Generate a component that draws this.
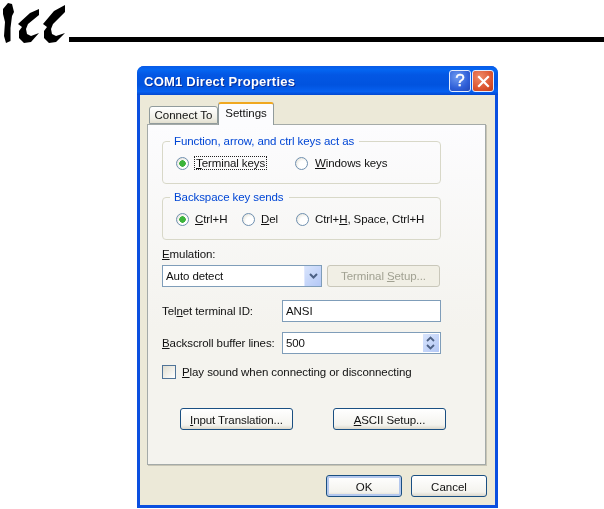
<div class="page">
  <header class="head">
    <svg class="logo" width="69" height="46" viewBox="0 0 69 46" aria-label="ICC logo">
      <path d="M8 3 L12 4 L14 12 L12 16 L10.5 28 L10.5 41 L6 43 L4 36 L5 22 L3 14 L3 9 Z" fill="#000"/>
      <path d="M39 9 L30 13 L18 24 L22 27 L19 31 L19 38 L24 43 L31 42 L39 33 L31 36 L27 34 L26 29 L28 24 L39 15 Z" fill="#000"/>
      <path d="M65 5 L54 11 L43 24 L47 27 L44 31 L44 38 L49 43 L56 42 L65 33 L56 36 L52 34 L51 29 L53 24 L65 12 Z" fill="#000"/>
    </svg>
    <div class="rule"></div>
  </header>

  <div class="window">
    <div class="titlebar">
      <span class="title">COM1 Direct Properties</span>
      <span class="cap help">?</span>
      <span class="cap close">
        <svg width="13" height="13" viewBox="0 0 13 13"><path d="M2 2 L11 11 M11 2 L2 11" stroke="#fff" stroke-width="2.2" stroke-linecap="square"/></svg>
      </span>
    </div>

    <div class="client">
      <div class="tabs">
        <div class="tab back">Connect To</div>
        <div class="tab active">Settings</div>
      </div>

      <div class="panel">
        <fieldset class="group">
          <legend>Function, arrow, and ctrl keys act as</legend>
          <div class="radios keys">
            <label class="r first"><input type="radio" name="k" checked /><span class="focus"><u>T</u>erminal keys</span></label>
            <label class="r"><input type="radio" name="k" /><span><u>W</u>indows keys</span></label>
          </div>
        </fieldset>

        <fieldset class="group second">
          <legend>Backspace key sends</legend>
          <div class="radios">
            <label class="r ctrl"><input type="radio" name="b" checked /><span><u>C</u>trl+H</span></label>
            <label class="r del"><input type="radio" name="b" /><span><u>D</u>el</span></label>
            <label class="r"><input type="radio" name="b" /><span>Ctrl+<u>H</u>, Space, Ctrl+H</span></label>
          </div>
        </fieldset>

        <div class="emu-label"><u>E</u>mulation:</div>
        <div class="emu-row">
          <div class="combo">
            <span>Auto detect</span>
            <span class="drop">
              <svg width="11" height="9" viewBox="0 0 11 9"><path d="M2 2 L5.5 5.5 L9 2" fill="none" stroke="#4d6185" stroke-width="2"/></svg>
            </span>
          </div>
          <button class="btn disabled">Terminal <u>S</u>etup...</button>
        </div>

        <div class="field telnet">
          <span class="flabel">Tel<u>n</u>et terminal ID:</span>
          <div class="input">ANSI</div>
        </div>
        <div class="field scroll">
          <span class="flabel"><u>B</u>ackscroll buffer lines:</span>
          <div class="input spin-input">
            <span>500</span>
            <span class="spin">
              <svg width="15" height="18" viewBox="0 0 15 18"><path d="M4 7 L7.5 3.5 L11 7 M4 11 L7.5 14.5 L11 11" fill="none" stroke="#4d6185" stroke-width="1.8"/></svg>
            </span>
          </div>
        </div>

        <label class="check"><input type="checkbox" /><span><u>P</u>lay sound when connecting or disconnecting</span></label>

        <div class="actions">
          <button class="btn wide"><u>I</u>nput Translation...</button>
          <button class="btn wide"><u>A</u>SCII Setup...</button>
        </div>
      </div>

      <div class="footer">
        <button class="btn foot default">OK</button>
        <button class="btn foot">Cancel</button>
      </div>
    </div>
  </div>
</div>

<style>
  :global(body) { margin: 0; background: #fff; }
  .page { width: 604px; height: 509px; overflow: hidden; background: #fff; font-family: "Liberation Sans", Arial, sans-serif; font-size: 11.5px; color: #111; }

  .head { height: 66px; display: flex; align-items: flex-start; }
  .logo { flex: none; }
  .rule { flex: 1; height: 5px; margin-top: 37px; background: #000; }

  .window { width: 361px; height: 442px; margin-left: 137px; display: flex; flex-direction: column; border-radius: 7px 7px 0 0; overflow: hidden; background: #0a4fe0; filter: blur(0.45px); }

  .titlebar { height: 29px; flex: none; display: flex; align-items: center; gap: 1px; padding: 1px 4px 0 7px; box-sizing: border-box; background: linear-gradient(#0a5ae6 0%, #0466f2 12%, #0357e4 30%, #0153df 65%, #0660f0 88%, #0448d0 100%); }
  .title { flex: 1; color: #fff; font-weight: 700; font-size: 13px; letter-spacing: 0.24px; text-shadow: 1px 1px 0 #0a2f9a; }
  .cap { width: 22px; height: 22px; box-sizing: border-box; border: 1px solid #e4ecfc; border-radius: 3px; display: flex; align-items: center; justify-content: center; color: #fff; }
  .help { background: radial-gradient(circle at 35% 30%, #6f9bf0, #2f5fd8 60%, #2248b8); font-size: 17px; font-weight: 400; -webkit-text-stroke: 0.4px #fff; }
  .close { background: radial-gradient(circle at 35% 30%, #ee8a68, #dc5530 60%, #c03c18); }

  .client { flex: 1; margin: 0 3px 3px; background: #ece9d8; padding: 7px 9px 8px 7px; display: flex; flex-direction: column; min-height: 0; }

  .tabs { height: 23px; flex: none; display: flex; align-items: flex-end; padding-left: 2px; box-sizing: border-box; margin-bottom: -1px; position: relative; z-index: 1; }
  .tab { box-sizing: border-box; display: flex; align-items: center; justify-content: center; border: 1px solid #919b9c; border-radius: 3px 3px 0 0; }
  .back { width: 69px; height: 18px; margin-bottom: 1px; background: linear-gradient(#fff, #f0efe6 70%, #e2dfd0); }
  .active { width: 56px; height: 23px; background: #fcfcfe; border-top: 2px solid #f0a820; border-bottom: none; padding-bottom: 3px; }

  .panel { flex: 1; min-height: 0; border: 1px solid #a4aaa8; box-shadow: 1px 1px 0 #c8c5b5; background: linear-gradient(#fcfcfe, #f4f3ee 60%); padding: 9px 0 0 14px; box-sizing: border-box; width: 339px; letter-spacing: -0.09px; }

  .group { width: 279px; height: 50px; box-sizing: border-box; margin: 0; padding: 0; border: 1px solid #d8d8c8; border-radius: 4px; }
  .second { margin-top: 6px; }
  legend { margin-left: 7px; padding: 0 5px 0 4px; color: #0046d5; font-size: 11.5px; line-height: 14px; }

  .radios { height: 29px; display: flex; align-items: center; padding: 1px 0 0 13px; box-sizing: border-box; }
  .r { display: flex; align-items: center; gap: 6px; }
  .keys .r { gap: 7px; }
  .r.first { width: 119px; }
  .r.ctrl { width: 66px; }
  .r.del { width: 54px; }
  input[type="radio"] { appearance: none; margin: 0; width: 13px; height: 13px; flex: none; border: 1px solid #6f90b0; border-radius: 50%; background: radial-gradient(circle at 65% 65%, #fff 40%, #dcd9cc 100%); }
  input[type="radio"]:checked { background: radial-gradient(circle, #3cb43c 0 3px, transparent 3.5px), radial-gradient(circle at 65% 65%, #fff 40%, #dcd9cc 100%); }
  .focus { outline: 1px dotted #222; padding: 0 1px; margin-left: -1px; }
  u { text-underline-offset: 1px; }

  .emu-label { height: 14px; line-height: 14px; margin-top: 7px; }
  .emu-row { display: flex; gap: 5px; margin-top: 4px; }
  .combo { width: 160px; height: 22px; box-sizing: border-box; border: 1px solid #7f9db9; background: #fff; display: flex; align-items: center; justify-content: space-between; padding: 0 0 0 3px; }
  .drop { width: 17px; height: 20px; background: linear-gradient(135deg, #d8e4fc, #b4c8f6); border-left: 1px solid #e0e8fe; box-sizing: border-box; display: flex; align-items: center; justify-content: center; }

  .btn { font: inherit; letter-spacing: inherit; color: #111; padding: 1px 0 0; height: 22px; box-sizing: border-box; border: 1px solid #1a4f82; border-radius: 3px; background: linear-gradient(#fff, #f4f3ee 80%, #dcd8cc); }
  .btn.disabled { width: 113px; padding-top: 0; color: #a1a192; border-color: #c9c7ba; background: #f1efe5; }

  .field { display: flex; align-items: center; height: 22px; }
  .telnet { margin-top: 13px; }
  .scroll { margin-top: 10px; }
  .flabel { width: 120px; flex: none; }
  .input { width: 159px; height: 22px; box-sizing: border-box; border: 1px solid #7f9db9; background: #fff; display: flex; align-items: center; padding-left: 3px; }
  .spin-input { justify-content: space-between; padding-right: 1px; }
  .spin { width: 16px; height: 18px; background: linear-gradient(135deg, #d8e4fc, #b4c8f6); display: flex; }

  .check { display: flex; align-items: center; gap: 6px; height: 15px; margin-top: 10px; }
  input[type="checkbox"] { appearance: none; margin: 0; width: 14px; height: 14px; flex: none; border: 1px solid #4f7398; background: linear-gradient(135deg, #e0ddd0, #fff); }

  .actions { display: flex; margin-top: 29px; padding-left: 18px; gap: 40px; }
  .wide { width: 113px; }

  .footer { display: flex; justify-content: flex-end; gap: 9px; margin-top: 10px; width: 340px; }
  .foot { width: 76px; }
  .default { box-shadow: inset 0 0 0 2px #b4c8ee; }
</style>
